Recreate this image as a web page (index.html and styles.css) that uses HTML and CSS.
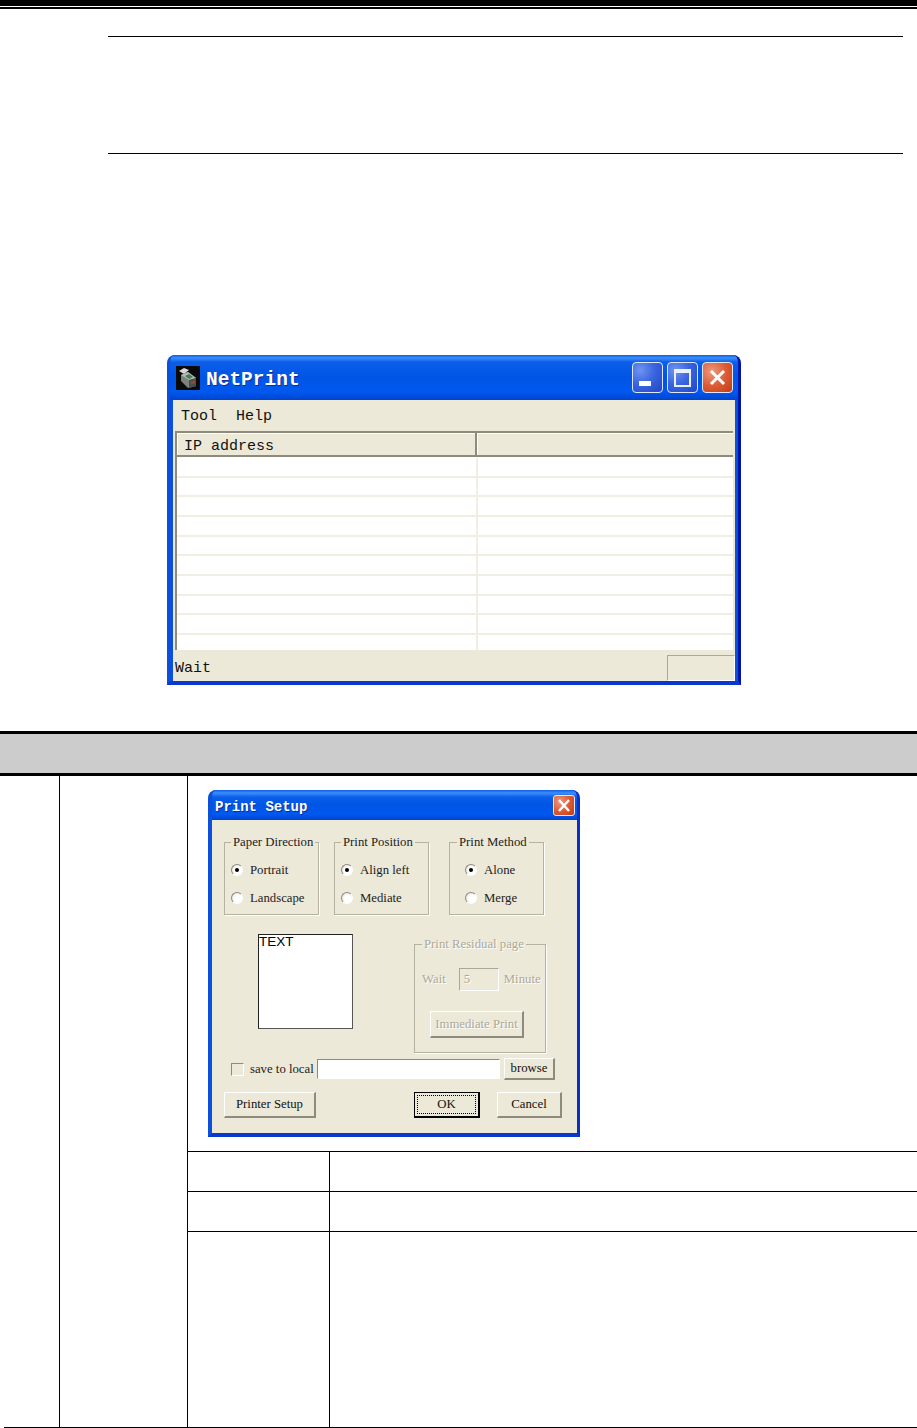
FILE: index.html
```html
<!DOCTYPE html>
<html lang="en">
<head>
    <meta charset="UTF-8">
    <meta name="viewport" content="width=device-width, initial-scale=1.0">
    <title>NetPrint</title>
    <link rel="stylesheet" href="styles.css">
</head>
<body>

<div class="top-rule"></div>

<!-- Empty note block between two rules -->
<div class="note"></div>

<!-- NetPrint main window -->
<div class="window net-window">
    <div class="titlebar net-titlebar">
        <svg class="app-icon" width="24" height="24" viewBox="0 0 24 24">
            <rect width="24" height="24" fill="#0a0a0a"/>
            <path d="M3 5 L8 2 L13 4 L8 8 Z" fill="#d8d8d8"/>
            <path d="M5 9 L12 6 L20 12 L20 20 L12 22 L5 15 Z" fill="#7c827c"/>
            <path d="M5 9 L12 6 L20 12 L13 14 Z" fill="#b4bab4"/>
            <path d="M9 10 L13 8 L17 11 L13 13 Z" fill="#3f7f55"/>
            <path d="M13 14 L20 12 L20 20 L13 22 Z" fill="#4a504a"/>
            <path d="M15 16 L19 15 L19 17 L15 18 Z" fill="#a04a3a"/>
        </svg>
        <span class="net-title">NetPrint</span>
        <div class="caption-buttons">
            <div class="caption-btn"><span class="min-glyph"></span></div>
            <div class="caption-btn"><span class="max-glyph"></span></div>
            <div class="caption-btn close-btn">
                <svg width="21" height="21" viewBox="0 0 21 21"><path d="M4 4 L17 17 M17 4 L4 17" stroke="#fff" stroke-width="3"/></svg>
            </div>
        </div>
    </div>
    <div class="net-body">
        <div class="menubar">
            <span>Tool</span>
            <span>Help</span>
        </div>
        <div class="list">
            <div class="list-head">
                <div class="head-cell head-ip">IP address</div>
                <div class="head-cell head-rest"></div>
            </div>
            <div class="list-rows">
                <div class="list-row"><div></div><div></div></div>
                <div class="list-row"><div></div><div></div></div>
                <div class="list-row"><div></div><div></div></div>
                <div class="list-row"><div></div><div></div></div>
                <div class="list-row"><div></div><div></div></div>
                <div class="list-row"><div></div><div></div></div>
                <div class="list-row"><div></div><div></div></div>
                <div class="list-row"><div></div><div></div></div>
                <div class="list-row"><div></div><div></div></div>
                <div class="list-row"><div></div><div></div></div>
            </div>
        </div>
        <div class="statusbar">
            <span>Wait</span>
            <div class="status-pane"></div>
        </div>
    </div>
</div>

<div class="spec-head"></div>

<div class="spec">
    <div class="spec-col spec-num"></div>
    <div class="spec-col spec-name"></div>
    <div class="spec-main">
        <div class="shot-cell">

            <!-- Print Setup dialog -->
            <div class="window dialog">
                <div class="titlebar dialog-titlebar">
                    <span class="dialog-title">Print Setup</span>
                    <div class="caption-btn close-btn dialog-close">
                        <svg width="20" height="19" viewBox="0 0 20 19"><path d="M5 4 L15 15 M15 4 L5 15" stroke="#fff" stroke-width="2.5"/></svg>
                    </div>
                </div>
                <div class="dialog-body">
                    <div class="group-row">
                        <fieldset class="group">
                            <legend>Paper Direction</legend>
                            <div class="radio-line"><span class="radio checked"></span>Portrait</div>
                            <div class="radio-line"><span class="radio"></span>Landscape</div>
                        </fieldset>
                        <fieldset class="group">
                            <legend>Print Position</legend>
                            <div class="radio-line"><span class="radio checked"></span>Align left</div>
                            <div class="radio-line"><span class="radio"></span>Mediate</div>
                        </fieldset>
                        <fieldset class="group group-method">
                            <legend>Print Method</legend>
                            <div class="radio-line"><span class="radio checked"></span>Alone</div>
                            <div class="radio-line"><span class="radio"></span>Merge</div>
                        </fieldset>
                    </div>

                    <div class="middle-row">
                        <div class="preview">TEXT</div>
                        <fieldset class="group residual">
                            <legend>Print Residual page</legend>
                            <div class="wait-line">
                                <span>Wait</span>
                                <span class="wait-input">5</span>
                                <span>Minute</span>
                            </div>
                            <div class="btn btn-disabled">Immediate Print</div>
                        </fieldset>
                    </div>

                    <div class="save-row">
                        <span class="checkbox"></span>
                        <span class="save-label">save to local</span>
                        <span class="path-input"></span>
                        <div class="btn browse-btn">browse</div>
                    </div>

                    <div class="action-row">
                        <div class="btn setup-btn">Printer Setup</div>
                        <div class="btn ok-btn"><span>OK</span></div>
                        <div class="btn cancel-btn">Cancel</div>
                    </div>
                </div>
            </div>

        </div>
        <div class="spec-row"><div class="spec-key"></div><div></div></div>
        <div class="spec-row"><div class="spec-key"></div><div></div></div>
        <div class="spec-row spec-row-tall"><div class="spec-key"></div><div></div></div>
    </div>
</div>

</body>
</html>
```

FILE: styles.css
```css
* {
    box-sizing: border-box;
}
body {
    margin: 0;
    background-color: #fff;
    font-family: "Liberation Serif", serif;
    color: #222;
}

/* page furniture */
.top-rule {
    height: 8.5px;
    background: linear-gradient(to bottom, #000 0, #000 6px, #fff 6px, #fff 7px, #000 7px);
}
.note {
    height: 118px;
    margin: 27.5px 14px 0 108px;
    border-top: 1px solid #000;
    border-bottom: 1px solid #000;
}

/* xp style windows */
.window {
    background-color: #0a50dc;
    border-radius: 8px 8px 0 0;
    overflow: hidden;
}
.titlebar {
    display: flex;
    align-items: center;
    background: linear-gradient(to bottom, #0a5fe6 0, #3d8ffb 3px, #0c5ee8 7px, #0055e6 50%, #0058ee 82%, #0043cf 100%);
}
.net-window {
    width: 574px;
    height: 330px;
    margin: 201px 0 0 167px;
    border-right: 3px solid #0014a8;
    border-bottom: 4px solid #0a37d0;
    border-left: 3px solid #0a50dc;
}
.net-titlebar {
    height: 45px;
    padding: 0 0 0 6px;
}
.app-icon {
    flex: none;
}
.net-title {
    margin: 5px 0 0 6px;
    font-family: "Liberation Mono", monospace;
    font-size: 19.5px;
    font-weight: bold;
    color: #fff;
    text-shadow: 1px 1px 0 #0a2f9a;
}
.caption-buttons {
    display: flex;
    gap: 4px;
    margin-left: auto;
    margin-right: 5px;
}
.caption-btn {
    display: flex;
    width: 31px;
    height: 31px;
    border: 1px solid #dfe8fb;
    border-radius: 4px;
    background: radial-gradient(circle at 25% 25%, #6f94f0 0, #3b66e0 45%, #1f45c8 100%);
}
.min-glyph {
    width: 12px;
    height: 5px;
    margin: 18px 0 0 6px;
    background-color: #fff;
}
.max-glyph {
    width: 18px;
    height: 18px;
    margin: 6px;
    border: 2px solid #eaf0ff;
    border-top-width: 4px;
}
.close-btn {
    align-items: center;
    justify-content: center;
    background: radial-gradient(circle at 30% 30%, #ec9a7e 0, #dd5c34 50%, #c13a12 100%);
}
.net-body {
    height: 281px;
    margin: 0 3px;
    background-color: #ece9d8;
    color: #111;
    font-family: "Liberation Mono", monospace;
    font-size: 15px;
}
.menubar {
    display: flex;
    gap: 19px;
    height: 31px;
    padding: 8px 0 0 8px;
}
.list {
    height: 219px;
    margin: 0 2px;
    background-color: #fff;
    border-left: 2px solid #8e8a7e;
}
.list-head {
    display: flex;
    height: 27px;
    margin-left: -2px;
}
.head-cell {
    height: 26px;
    border-top: 2px solid #8e8a7e;
    border-bottom: 2px solid #8e8a7e;
    box-shadow: inset 1px 1px 0 #fff;
    background-color: #ece9d8;
}
.head-ip {
    width: 302px;
    padding: 5px 0 0 7px;
    border-right: 2px solid #8e8a7e;
    border-left: 2px solid #8e8a7e;
}
.head-rest {
    flex: 1;
}
.list-rows {
    display: grid;
    grid-template-rows: repeat(9, 19.67px) 1fr;
    height: 192px;
}
.list-row {
    display: flex;
    border-bottom: 2px solid #f1efe2;
}
.list-row:last-child {
    border-bottom: none;
}
.list-row div:first-child {
    width: 301px;
    border-right: 2px solid #f1efe2;
}
.statusbar {
    display: flex;
    justify-content: space-between;
    height: 31px;
    padding: 9px 0 0 2px;
}
.statusbar span {
    margin-top: 1px;
}
.status-pane {
    width: 68px;
    height: 26px;
    margin-top: -4px;
    border-top: 1px solid #aca899;
    border-left: 1px solid #aca899;
    border-right: 1px solid #fff;
    border-bottom: 1px solid #fff;
}

/* spec table */
.spec-head {
    height: 45px;
    margin-top: 46px;
    background-color: #ccc;
    border-top: 3px solid #000;
    border-bottom: 3px solid #000;
}
.spec {
    display: grid;
    grid-template-columns: 56px 128px 1fr;
    height: 652px;
    margin-left: 4px;
    border-bottom: 1px solid #000;
}
.spec-col {
    border-right: 1px solid #000;
}
.spec-main {
    display: grid;
    grid-template-rows: 375px 40px 40px 1fr;
}
.shot-cell {
    padding: 14px 0 0 20px;
}
.spec-row {
    display: grid;
    grid-template-columns: 142px 1fr;
    border-top: 1px solid #000;
}
.spec-key {
    border-right: 1px solid #000;
}

/* print setup dialog */
.dialog {
    width: 372px;
    height: 347px;
    border-right: 3px solid #0a2fc8;
    border-bottom: 4px solid #0a37d0;
    border-left: 4px solid #0a50dc;
}
.dialog-titlebar {
    justify-content: space-between;
    height: 30px;
    padding: 0 2px 0 3px;
}
.dialog-title {
    margin-top: 3px;
    font-family: "Liberation Mono", monospace;
    font-size: 14px;
    font-weight: bold;
    color: #fff;
    text-shadow: 1px 1px 0 #0a2f9a;
}
.dialog-close {
    width: 22px;
    height: 21px;
    border-radius: 3px;
}
.dialog-body {
    height: 313px;
    padding: 15px 0 0 12px;
    background-color: #ece9d8;
    font-size: 12.75px;
}
.group-row {
    display: flex;
    gap: 15px;
}
.group {
    width: 95px;
    height: 80px;
    margin: 0;
    padding: 7px 0 0 6px;
    border: 1px solid #b5b2a4;
    box-shadow: 1px 1px 0 #fff;
}
.group legend {
    padding: 0 2px;
    margin-left: 0;
    line-height: 14px;
}
.group-method {
    margin-left: 5px;
}
.group-method legend {
    margin-left: 1px;
}
.group-method .radio-line {
    padding-left: 9px;
}
.radio-line {
    display: flex;
    align-items: center;
    height: 28px;
    gap: 7px;
}
.radio {
    display: flex;
    align-items: center;
    justify-content: center;
    width: 12px;
    height: 12px;
    border-radius: 50%;
    border: 1px solid #fff;
    border-top-color: #8e8a7e;
    border-left-color: #8e8a7e;
    background: radial-gradient(circle at 60% 60%, #fff 40%, #dcd9ca 100%);
}
.radio.checked::after {
    content: "";
    width: 4px;
    height: 4px;
    border-radius: 50%;
    background-color: #000;
}
.middle-row {
    display: flex;
    align-items: flex-start;
    padding: 19px 0 0 34px;
}
.preview {
    width: 95px;
    height: 95px;
    padding-left: 0;
    border: 1px solid #222;
    border-right-color: #555;
    border-bottom-color: #555;
    background-color: #fff;
    font-family: "Liberation Sans", sans-serif;
    font-size: 13.5px;
    line-height: 13px;
    color: #000;
}
.residual {
    width: 132px;
    height: 116px;
    margin: 3px 0 0 61px;
    padding: 17px 0 0 7px;
    color: #aca899;
    text-shadow: 1px 1px 0 #fff;
}
.wait-line {
    display: flex;
    align-items: center;
    height: 23px;
}
.wait-input {
    width: 40px;
    height: 23px;
    margin: 0 5px 0 13px;
    padding: 3px 0 0 4px;
    border: 1px solid #aca899;
    border-right-color: #fff;
    border-bottom-color: #fff;
}
.btn {
    display: flex;
    align-items: center;
    justify-content: center;
    background-color: #ece9d8;
    border: 1px solid #fff;
    border-right: 2px solid #8e8a7e;
    border-bottom: 2px solid #8e8a7e;
    color: #111;
}
.btn-disabled {
    width: 94px;
    height: 27px;
    margin: 20px 0 0 8px;
    color: #aca899;
}
.save-row {
    display: flex;
    align-items: center;
    height: 22px;
    margin-top: 5px;
    padding-left: 7px;
}
.checkbox {
    width: 13px;
    height: 13px;
    border: 1px solid #8e8a7e;
    border-right-color: #fff;
    border-bottom-color: #fff;
    background-color: #ece9d8;
}
.save-label {
    width: 67px;
    margin-left: 6px;
    white-space: nowrap;
}
.path-input {
    width: 183px;
    height: 20px;
    border: 1px solid #8e8a7e;
    border-right-color: #fff;
    border-bottom-color: #fff;
    background-color: #fff;
}
.browse-btn {
    width: 51px;
    height: 22px;
    margin-left: 4px;
}
.action-row {
    display: flex;
    margin-top: 12px;
}
.action-row .btn {
    height: 26px;
}
.setup-btn {
    width: 92px;
}
.ok-btn {
    width: 66px;
    margin-left: 98px;
    padding: 2px;
    border: 1px solid #000;
    border-right: 2px solid #000;
    border-bottom: 2px solid #000;
}
.ok-btn span {
    display: flex;
    align-items: center;
    justify-content: center;
    width: 100%;
    height: 100%;
    border: 1px dotted #000;
}
.cancel-btn {
    width: 65px;
    margin-left: 17px;
}
```
